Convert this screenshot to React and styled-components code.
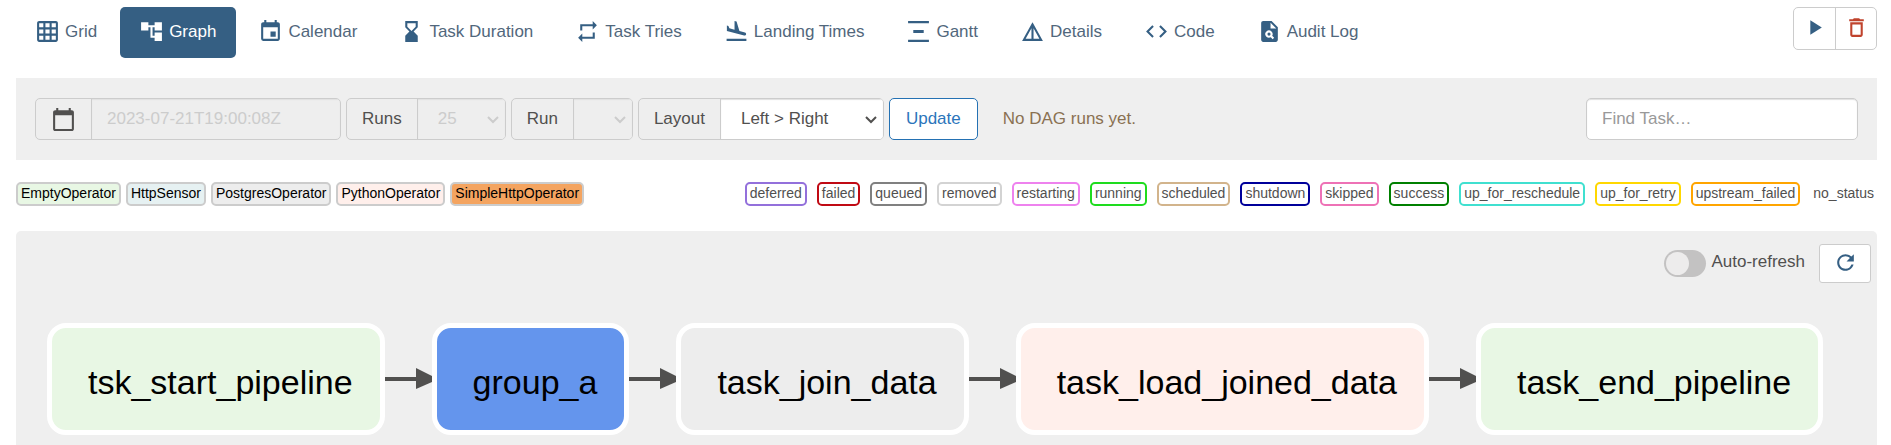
import React from "react";
import styled, { createGlobalStyle } from "styled-components";
import {
  MdGridOn,
  MdAccountTree,
  MdEvent,
  MdHourglassBottom,
  MdRepeat,
  MdFlightLand,
  MdVerticalDistribute,
  MdDetails,
  MdCode,
  MdPlagiarism,
  MdPlayArrow,
  MdDeleteOutline,
  MdCalendarToday,
  MdRefresh,
} from "react-icons/md";

const GlobalStyle = createGlobalStyle`
  *, *::before, *::after { box-sizing: border-box; }
  html { height: 100%; }
  body {
    margin: 0;
    min-height: 100%;
    background: #fff;
    color: #51504f;
    font: 17px/24px "Liberation Sans", Arial, sans-serif;
  }
  body, #root { display: flex; flex-direction: column; }
  #root { flex: 1; }
  button, input, select { font: inherit; color: inherit; margin: 0; }
  svg { display: block; flex: none; }
`;

const Page = styled.div`
  flex: 1;
  display: flex;
  flex-direction: column;
  padding: 7px 14px 0 16px;
`;

const Header = styled.header`
  display: flex;
  justify-content: space-between;
  align-items: flex-start;
  margin-bottom: 20px;
`;

const Tabs = styled.nav`
  display: flex;
  gap: 3px;
`;

const Tab = styled.a`
  display: flex;
  align-items: center;
  gap: 5px;
  height: 51px;
  padding: 0 20px 2px 19px;
  border-radius: 5px;
  color: ${(p) => (p.$active ? "#fff" : "#51677c")};
  background: ${(p) => (p.$active ? "#355f83" : "transparent")};
  text-decoration: none;
  white-space: nowrap;
  svg { color: ${(p) => (p.$active ? "#fff" : "#355f83")}; }
`;

const ButtonGroup = styled.div`
  display: flex;
  border: 1px solid #ccc;
  border-radius: 5px;
`;

const IconButton = styled.button`
  display: flex;
  justify-content: center;
  width: 41px;
  height: 41px;
  padding: 7px 0 0;
  border: 0;
  background: none;
  color: ${(p) => (p.$danger ? "#c0432d" : "#355f83")};
  & + & { border-left: 1px solid #ccc; }
`;

const FilterBar = styled.form`
  display: flex;
  justify-content: space-between;
  align-items: center;
  padding: 20px 19px;
  background: #efefef;
`;

const Filters = styled.div`
  display: flex;
  align-items: center;
  gap: 5px;
`;

const InputGroup = styled.div`
  display: flex;
  height: 42px;
  border: 1px solid #ccc;
  border-radius: 5px;
  background: #eee;
  overflow: hidden;
`;

const Addon = styled.label`
  display: flex;
  align-items: center;
  padding: 0 15px;
  border-right: 1px solid #ccc;
`;

const DateInput = styled.input`
  width: 248px;
  border: 0;
  padding: 0 15px;
  background: transparent;
  box-shadow: inset 0 1px 1px #e0e0e0;
  &:disabled { color: #ccc; }
`;

const SelectBox = styled.div`
  display: grid;
  align-items: center;
  width: ${(p) => p.$width}px;
  color: ${(p) => (p.$off ? "#ccc" : "#51504f")};
  background: ${(p) => (p.$off ? "#eee" : "#fff")};
  box-shadow: inset 0 1px 1px #e0e0e0;
  > * { grid-area: 1 / 1; }
  svg { justify-self: end; margin-right: 6px; pointer-events: none; }
`;

const Select = styled.select`
  appearance: none;
  width: 100%;
  height: 100%;
  padding: 0 20px;
  border: 0;
  background: none;
  opacity: 1;
`;

const UpdateButton = styled.button`
  height: 42px;
  padding: 0 16px;
  border: 1px solid #2471b3;
  border-radius: 5px;
  background: #fff;
  color: #2b75bb;
`;

const Notice = styled.span`
  margin-left: 20px;
  color: #8a7152;
`;

const SearchInput = styled.input`
  width: 272px;
  height: 42px;
  padding: 0 15px;
  border: 1px solid #ccc;
  border-radius: 5px;
  background: #fff;
  box-shadow: inset 0 1px 1px #e0e0e0;
  &::placeholder { color: #999; opacity: 1; }
`;

const Legend = styled.div`
  display: flex;
  justify-content: space-between;
  padding: 22px 0 25px;
`;

const BadgeList = styled.div`
  display: flex;
  gap: ${(p) => p.$gap}px;
`;

const Badge = styled.span`
  height: 24px;
  padding: 0 3px;
  border: solid ${(p) => p.$border || "transparent"};
  border-width: ${(p) => (p.$border ? "2px" : "2px 0")};
  border-radius: 5px;
  background: ${(p) => p.$fill || "#fff"};
  color: ${(p) => (p.$fill ? "#000" : "#51504f")};
  font-size: 14px;
  line-height: 18px;
  white-space: nowrap;
`;

const GraphPanel = styled.main`
  flex: 1;
  background: #efefef;
  border-radius: 5px 5px 0 0;
`;

const GraphTools = styled.div`
  display: flex;
  justify-content: flex-end;
  align-items: center;
  padding: 13px 6px 0 0;
`;

const Switch = styled.input`
  appearance: none;
  width: 42px;
  height: 27px;
  padding: 2px;
  border-radius: 14px;
  background: #c3c2c2;
  &::before {
    content: "";
    display: block;
    width: 23px;
    height: 23px;
    border-radius: 50%;
    background: #edecec;
  }
`;

const SwitchLabel = styled.label`
  padding: 0 14px 3px 5px;
`;

const RefreshButton = styled.button`
  display: grid;
  place-items: center;
  width: 52px;
  height: 39px;
  padding: 0 0 2px;
  border: 1px solid #ccc;
  border-radius: 3px;
  background: #fff;
  color: #355f83;
`;

const Flow = styled.div`
  display: flex;
  align-items: center;
  padding: 40px 31px 10px;
`;

const Node = styled.div`
  height: 112px;
  padding: 35px 27px 0 36px;
  border: 5px solid #fff;
  border-radius: 19px;
  background: ${(p) => p.$fill};
  color: #000;
  font-size: 34px;
  line-height: 38px;
  white-space: nowrap;
`;

const tabs = [
  ["Grid", MdGridOn],
  ["Graph", MdAccountTree],
  ["Calendar", MdEvent],
  ["Task Duration", MdHourglassBottom],
  ["Task Tries", MdRepeat],
  ["Landing Times", MdFlightLand],
  ["Gantt", MdVerticalDistribute],
  ["Details", MdDetails],
  ["Code", MdCode],
  ["Audit Log", MdPlagiarism],
];

const operators = [
  ["EmptyOperator", "#e8f7e4"],
  ["HttpSensor", "#e6f1f2"],
  ["PostgresOperator", "#ededed"],
  ["PythonOperator", "#ffefeb"],
  ["SimpleHttpOperator", "#f4a460"],
];

const states = [
  ["deferred", "mediumpurple"],
  ["failed", "#c00a14"],
  ["queued", "gray"],
  ["removed", "lightgrey"],
  ["restarting", "violet"],
  ["running", "#1edc1e"],
  ["scheduled", "tan"],
  ["shutdown", "#00009a"],
  ["skipped", "#ee72b6"],
  ["success", "green"],
  ["up_for_reschedule", "turquoise"],
  ["up_for_retry", "gold"],
  ["upstream_failed", "orange"],
  ["no_status", null],
];

const nodes = [
  ["tsk_start_pipeline", "#e8f7e4"],
  ["group_a", "#6495ed"],
  ["task_join_data", "#ededed"],
  ["task_load_joined_data", "#ffefeb"],
  ["task_end_pipeline", "#e8f7e4"],
];

const Chevron = () => (
  <svg width="12" height="12" viewBox="0 0 12 12" fill="none" stroke="currentColor" strokeWidth="2" aria-hidden="true">
    <path d="M1 4l5 5 5-5" />
  </svg>
);

const Edge = () => (
  <svg width="47" height="22" viewBox="0 0 47 22" fill="#51504f" aria-hidden="true">
    <path d="M0 9h31v4H0z" />
    <path d="M31 0l16 8v6L31 21z" />
  </svg>
);

export default function App() {
  return (
    <Page>
      <GlobalStyle />
      <Header>
        <Tabs>
          {tabs.map(([name, Icon]) => (
            <Tab key={name} href="#" $active={name === "Graph"}>
              <Icon size={25} />
              {name}
            </Tab>
          ))}
        </Tabs>
        <ButtonGroup>
          <IconButton type="button" aria-label="Trigger DAG">
            <MdPlayArrow size={25} />
          </IconButton>
          <IconButton type="button" aria-label="Delete DAG" $danger>
            <MdDeleteOutline size={25} />
          </IconButton>
        </ButtonGroup>
      </Header>

      <FilterBar onSubmit={(e) => e.preventDefault()}>
        <Filters>
          <InputGroup>
            <Addon htmlFor="base-date" aria-label="Base date">
              <MdCalendarToday size={25} />
            </Addon>
            <DateInput id="base-date" defaultValue="2023-07-21T19:00:08Z" disabled />
          </InputGroup>
          <InputGroup>
            <Addon htmlFor="runs">Runs</Addon>
            <SelectBox $width={87} $off>
              <Select id="runs" disabled>
                <option>25</option>
              </Select>
              <Chevron />
            </SelectBox>
          </InputGroup>
          <InputGroup>
            <Addon htmlFor="run">Run</Addon>
            <SelectBox $width={58} $off>
              <Select id="run" disabled />
              <Chevron />
            </SelectBox>
          </InputGroup>
          <InputGroup>
            <Addon htmlFor="layout">Layout</Addon>
            <SelectBox $width={162}>
              <Select id="layout">
                <option>Left &gt; Right</option>
              </Select>
              <Chevron />
            </SelectBox>
          </InputGroup>
          <UpdateButton type="submit">Update</UpdateButton>
          <Notice>No DAG runs yet.</Notice>
        </Filters>
        <SearchInput type="text" aria-label="Find task" placeholder="Find Task…" />
      </FilterBar>

      <Legend>
        <BadgeList $gap={5}>
          {operators.map(([name, fill]) => (
            <Badge key={name} $fill={fill} $border="#ccc">
              {name}
            </Badge>
          ))}
        </BadgeList>
        <BadgeList $gap={10}>
          {states.map(([name, border]) => (
            <Badge key={name} $border={border}>
              {name}
            </Badge>
          ))}
        </BadgeList>
      </Legend>

      <GraphPanel>
        <GraphTools>
          <Switch type="checkbox" role="switch" id="auto-refresh" />
          <SwitchLabel htmlFor="auto-refresh">Auto-refresh</SwitchLabel>
          <RefreshButton type="button" aria-label="Refresh">
            <MdRefresh size={25} />
          </RefreshButton>
        </GraphTools>
        <Flow>
          {nodes.map(([name, fill], i) => (
            <React.Fragment key={name}>
              {i > 0 && <Edge />}
              <Node $fill={fill}>{name}</Node>
            </React.Fragment>
          ))}
        </Flow>
      </GraphPanel>
    </Page>
  );
}
